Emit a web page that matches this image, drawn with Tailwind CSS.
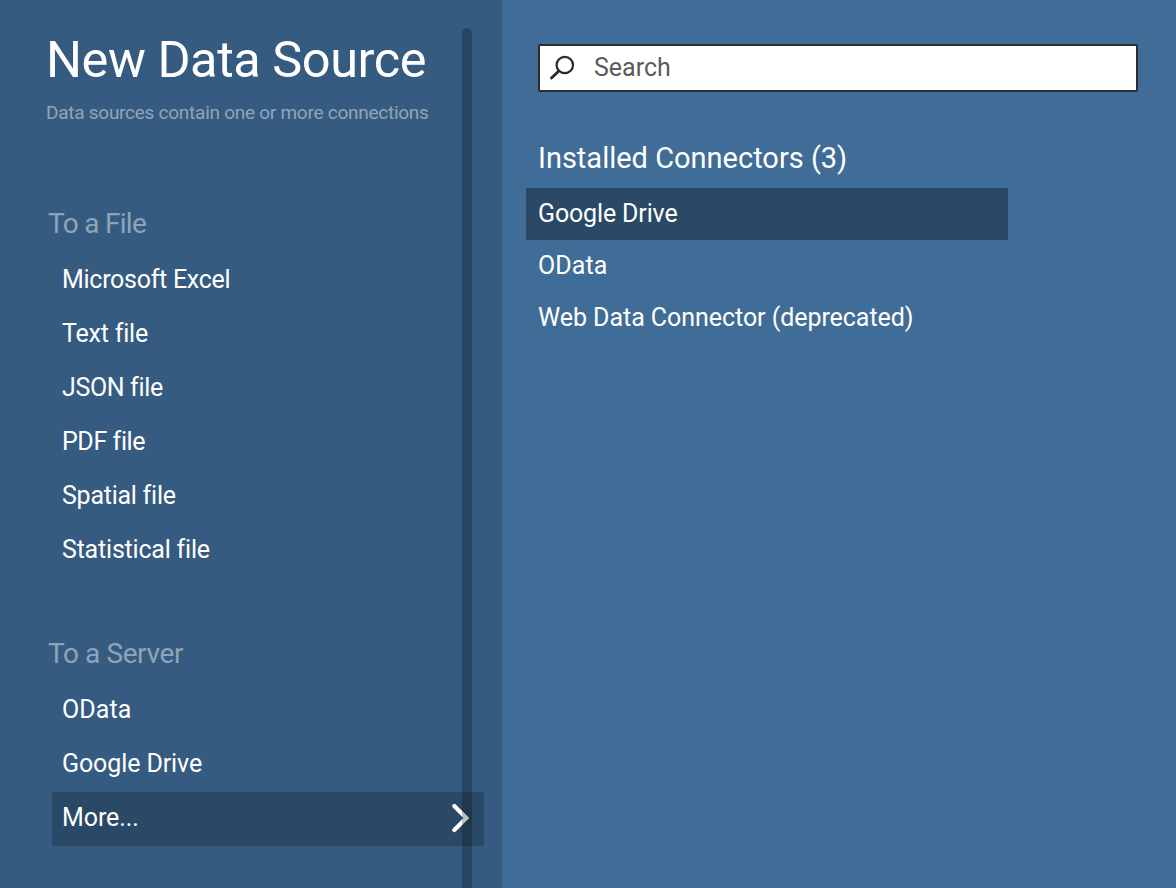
<!DOCTYPE html>
<html lang="en">
<head>
<meta charset="utf-8">
<title>New Data Source</title>
<script src="https://cdn.jsdelivr.net/npm/@tailwindcss/browser@4"></script>
</head>
<body class="relative flex h-[888px] w-[1176px] overflow-hidden bg-[#3f6d97] font-['Roboto',sans-serif] text-[25px] text-white [font-variant-ligatures:none]">
  <aside class="relative h-full w-[502px] shrink-0 bg-[#365b80] pt-[28px]">
    <h1 class="pl-[46px] text-[50.5px] leading-[64px] tracking-[-0.46px] whitespace-nowrap">New Data Source</h1>
    <p class="pl-[46px] text-[19px] leading-[42px] tracking-[-0.26px] whitespace-nowrap text-[#90a5b9]">Data sources contain one or more connections</p>
    <section class="mt-[62px]">
      <h2 class="pl-[48px] text-[28px] leading-[56px] tracking-[-0.7px] text-[#8fa4b8]">To a File</h2>
      <ul class="mt-[2px] ml-[52px] w-[432px] leading-[52px]">
        <li class="h-[54px] pl-[10px] tracking-[-0.28px]">Microsoft Excel</li>
        <li class="h-[54px] pl-[10px] tracking-[-0.2px]">Text file</li>
        <li class="h-[54px] pl-[10px] tracking-[-0.35px]">JSON file</li>
        <li class="h-[54px] pl-[10px] tracking-[-0.4px]">PDF file</li>
        <li class="h-[54px] pl-[10px] tracking-[-0.25px]">Spatial file</li>
        <li class="h-[54px] pl-[10px] tracking-[-0.2px]">Statistical file</li>
      </ul>
    </section>
    <section class="mt-[48px]">
      <h2 class="pl-[48px] text-[28px] leading-[56px] tracking-[-0.4px] text-[#8fa4b8]">To a Server</h2>
      <ul class="mt-[2px] ml-[52px] w-[432px] leading-[52px]">
        <li class="h-[54px] pl-[10px] tracking-[0.1px]">OData</li>
        <li class="h-[54px] pl-[10px] tracking-[-0.1px]">Google Drive</li>
        <li class="flex h-[54px] items-start justify-between bg-[#2a4966] pr-[14px] pl-[10px] tracking-[-0.1px]"><span>More...</span>
          <svg class="mt-[11px] h-[30px] w-[20px]" viewBox="0 0 20 30" fill="none" stroke="#fff" stroke-width="4.200" stroke-linecap="round"><path d="M4.300 3L16.300 15L4.300 27"/></svg>
        </li>
      </ul>
    </section>
    <div class="absolute top-[28px] bottom-0 left-[462px] w-[10px] rounded-t-[5px] bg-[#000800]/25"></div>
  </aside>
  <main class="flex-1 pt-[44px] pl-[24px]">
    <label class="ml-[12px] flex h-[48px] w-[600px] items-center rounded-[2px] border-2 border-[#302d2e] bg-white pl-[9px] text-[#5b5b5b]">
      <svg class="mr-[17px] h-[28px] w-[28px]" viewBox="0 0 28 28" fill="none" stroke="#2b292a" stroke-width="2.200"><circle cx="15.800" cy="11" r="8.200"/><path stroke-width="2.800" stroke-linecap="round" d="M9.800 17L2.500 24"/></svg>
      <span>Search</span>
    </label>
    <h2 class="mt-[38px] pl-[12px] text-[29px] leading-[56px]">Installed Connectors (3)</h2>
    <ul class="mt-[2px] w-[482px] leading-[52px]">
      <li class="h-[52px] bg-[#2a4966] pl-[12px] tracking-[-0.15px]">Google Drive</li>
      <li class="h-[52px] pl-[12px] tracking-[0.1px]">OData</li>
      <li class="h-[52px] pl-[12px] tracking-[-0.05px]">Web Data Connector (deprecated)</li>
    </ul>
  </main>
</body>
</html>
